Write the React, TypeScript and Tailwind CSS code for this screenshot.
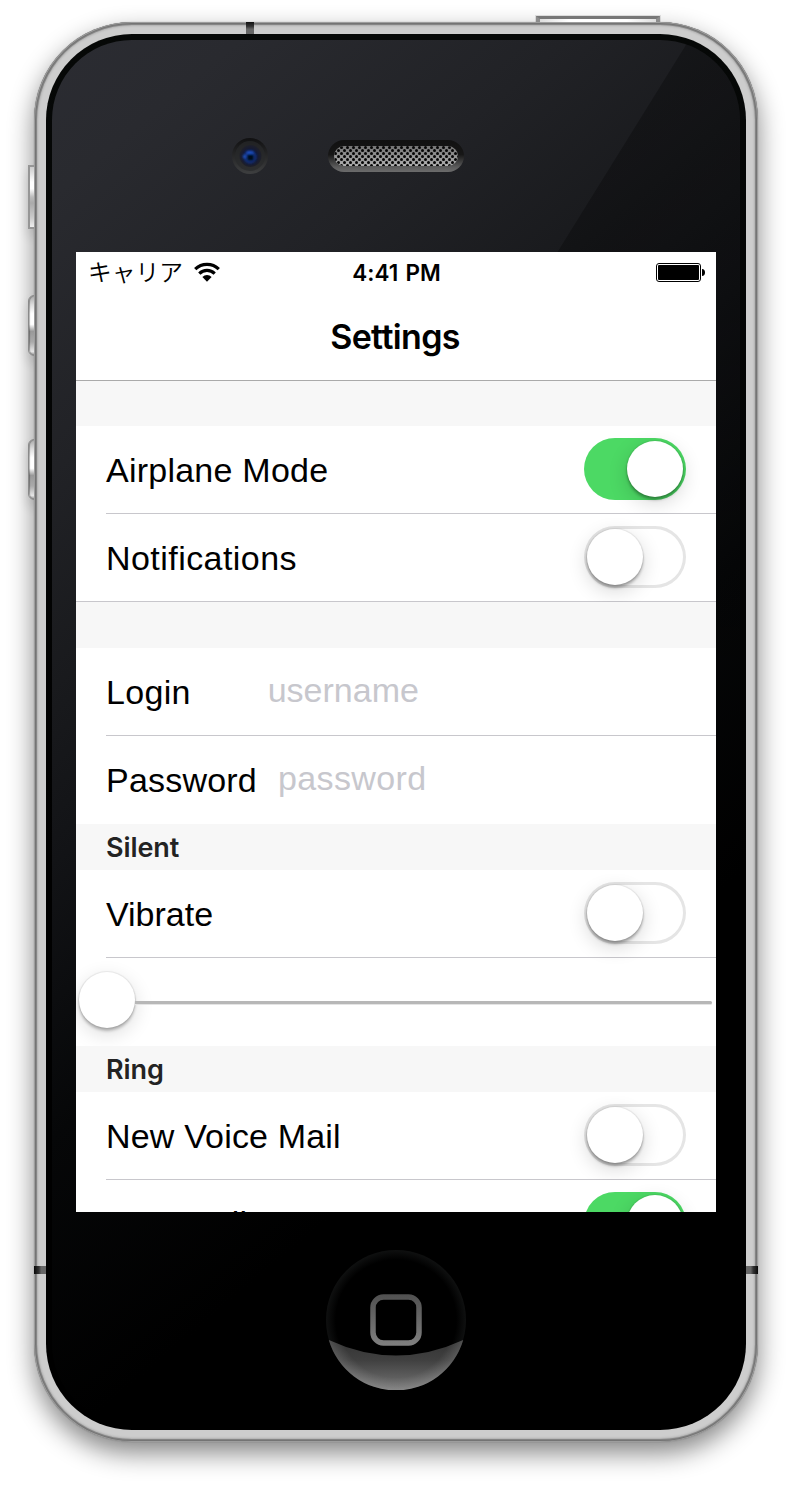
import React, { useState } from "react";

function Toggle({ initial = false, label }: { initial?: boolean; label: string }) {
  const [on, setOn] = useState(initial);
  return (
    <button
      type="button"
      role="switch"
      aria-label={label}
      aria-checked={on}
      onClick={() => setOn(!on)}
      className={`mb-px ml-auto flex h-[62px] w-[102px] shrink-0 items-center rounded-full p-[3px] ${
        on ? "justify-end bg-[#4cd964]" : "justify-start bg-white shadow-[inset_0_0_0_3px_#e5e5e5]"
      }`}
    >
      <span className="size-14 rounded-full bg-white shadow-[0_0_1px_1px_rgba(0,0,0,0.07),0_3px_3px_rgba(0,0,0,0.28),0_6px_20px_rgba(0,0,0,0.16)]" />
    </button>
  );
}

type RowProps = {
  label: string;
  tracking?: string;
  divider?: "inset" | "full" | "none";
  children?: React.ReactNode;
};

function Row({ label, tracking = "tracking-normal", divider = "inset", children }: RowProps) {
  return (
    <div
      className={`flex h-[88px] shrink-0 bg-white pl-[30px] ${divider === "full" ? "border-b border-[#c8c7cc]" : ""}`}
    >
      <div
        className={`flex flex-1 items-center pr-[30px] ${
          divider === "inset" ? "border-b border-[#c8c7cc]" : divider === "none" ? "border-b border-transparent" : ""
        }`}
      >
        <span className={`whitespace-nowrap pt-px text-[34px] leading-10 ${tracking}`}>{label}</span>
        {children}
      </div>
    </div>
  );
}

function SectionHeader({ title }: { title: string }) {
  return (
    <div className="flex h-[46px] shrink-0 items-center bg-[#f7f7f7] pl-[30px] pt-[2px] font-['Inter',sans-serif] text-[27px] font-semibold tracking-[-0.1px] text-[#232323]">
      {title}
    </div>
  );
}

function StatusBar() {
  return (
    <div className="grid h-10 grid-cols-3 items-center pl-3 pr-[11px]">
      <div className="flex items-center gap-[11px]">
        <span className="mb-[3px] font-['Noto_Sans_CJK_JP',sans-serif] text-[23.75px] font-[350] leading-9">キャリア</span>
        <svg width="26" height="20" viewBox="0 0 26 20" fill="none" aria-hidden="true">
          <path d="M1.2 7.2a16.7 16.7 0 0 1 23.600 0" stroke="black" strokeWidth="3.2" />
          <path d="M5.3 11.6a11 11 0 0 1 15.400 0" stroke="black" strokeWidth="3.2" />
          <path d="M8.4 15a6.500 6.500 0 0 1 9.200 0L13 19.700z" fill="black" />
        </svg>
      </div>
      <span className="pt-px text-center font-['Inter',sans-serif] text-[22.5px] font-semibold tracking-[0.05px] [word-spacing:1.500px]">
        4:41 PM
      </span>
      <div className="flex justify-end pt-[2px]">
        <svg width="49" height="20" viewBox="0 0 49 20" aria-hidden="true">
          <rect x=".5" y=".5" width="44" height="18" rx="2.5" fill="white" stroke="black" />
          <rect x="2" y="2" width="41" height="15" rx="1" fill="black" />
          <path d="M46 6c2 0 3 1.5 3 3.5S48 13 46 13z" fill="black" />
        </svg>
      </div>
    </div>
  );
}

function Screen() {
  return (
    <div className="flex h-[960px] w-[640px] shrink-0 flex-col overflow-hidden bg-white font-['Liberation_Sans',sans-serif] text-black">
      <header className="h-[129px] shrink-0 border-b border-[#aaa]">
        <StatusBar />
        <h1 className="pr-[2px] pt-[23px] text-center font-['Inter',sans-serif] text-[34px] font-semibold leading-[44px] tracking-[-0.65px]">
          Settings
        </h1>
      </header>
      <div className="h-[45px] shrink-0 bg-[#f7f7f7]" />
      <Row label="Airplane Mode" tracking="tracking-[0.24px]">
        <Toggle label="Airplane Mode" initial />
      </Row>
      <Row label="Notifications" tracking="tracking-[0.45px]" divider="full">
        <Toggle label="Notifications" />
      </Row>
      <div className="h-[46px] shrink-0 bg-[#f7f7f7]" />
      <Row label="Login" tracking="tracking-[0.3px]">
        <input
          aria-label="Login"
          placeholder="username"
          className="mb-[2px] ml-[77px] w-80 text-[34px] placeholder:text-[#c7c7cd]"
        />
      </Row>
      <Row label="Password" tracking="tracking-[0.2px]" divider="none">
        <input
          aria-label="Password"
          type="password"
          placeholder="password"
          className="mb-[2px] ml-[21px] w-80 text-[34px] tracking-[0.4px] placeholder:text-[#c7c7cd]"
        />
      </Row>
      <SectionHeader title="Silent" />
      <Row label="Vibrate">
        <Toggle label="Vibrate" />
      </Row>
      <div className="flex h-[88px] shrink-0 items-center pl-[3px] pr-1">
        <div className="mb-1 size-14 shrink-0 rounded-full bg-white shadow-[0_0_1px_1px_rgba(0,0,0,0.07),0_3px_3px_rgba(0,0,0,0.24),0_6px_20px_rgba(0,0,0,0.14)]" />
        <div className="mt-px h-[3px] flex-1 rounded-r-full bg-[#b7b7b7] shadow-[0_1px_0_#e4e4e4]" />
      </div>
      <SectionHeader title="Ring" />
      <Row label="New Voice Mail" tracking="tracking-[0.17px]">
        <Toggle label="New Voice Mail" />
      </Row>
      <Row label="New Mail" tracking="tracking-[0.17px] pb-[3px]">
        <Toggle label="New Mail" initial />
      </Row>
    </div>
  );
}

function Camera() {
  return (
    <svg width="36" height="36" viewBox="0 0 36 36" aria-hidden="true">
      <defs>
        <linearGradient id="cam-ring" x1="0" y1="0" x2="0" y2="1">
          <stop offset="0" stopColor="#101011" />
          <stop offset="1" stopColor="#3e3f40" />
        </linearGradient>
        <radialGradient id="cam-lens">
          <stop offset="0" stopColor="#0b1a4a" />
          <stop offset="0.5" stopColor="#11183a" />
          <stop offset="1" stopColor="#1f2029" />
        </radialGradient>
        <filter id="cam-soft">
          <feGaussianBlur stdDeviation="0.8" />
        </filter>
      </defs>
      <circle cx="18" cy="18" r="18" fill="url(#cam-ring)" />
      <circle cx="18" cy="18" r="15" fill="#28292b" opacity="0.7" />
      <circle cx="18.5" cy="18" r="11" fill="url(#cam-lens)" />
      <g filter="url(#cam-soft)">
        <circle cx="18" cy="19" r="6.5" fill="#12307c" />
        <ellipse cx="18" cy="14.500" rx="4" ry="1.700" fill="#1f50c0" />
        <circle cx="12.500" cy="18.500" r="1.700" fill="#1f55c4" />
        <circle cx="18.500" cy="19.500" r="3.600" fill="#05101c" />
      </g>
    </svg>
  );
}

function Speaker() {
  return (
    <svg width="136" height="32" viewBox="0 0 136 32" aria-hidden="true">
      <defs>
        <linearGradient id="spk-rim" x1="0" y1="0" x2="0" y2="1">
          <stop offset="0" stopColor="#111" />
          <stop offset="0.45" stopColor="#161616" />
          <stop offset="0.85" stopColor="#5c5c5c" />
          <stop offset="1" stopColor="#6c6c6c" />
        </linearGradient>
        <linearGradient id="spk-base" x1="0" y1="0" x2="0" y2="1">
          <stop offset="0" stopColor="#747474" />
          <stop offset="1" stopColor="#b0b0b0" />
        </linearGradient>
        <pattern id="spk-mesh" width="6" height="6" patternUnits="userSpaceOnUse">
          <circle cx="1.5" cy="1.5" r="1.500" fill="#050505" />
          <circle cx="4.5" cy="4.5" r="1.500" fill="#050505" />
        </pattern>
      </defs>
      <rect width="136" height="32" rx="16" fill="url(#spk-rim)" />
      <rect x="6" y="6" width="124" height="20" rx="10" fill="url(#spk-base)" />
      <rect x="6" y="6" width="124" height="20" rx="10" fill="url(#spk-mesh)" />
    </svg>
  );
}

function HomeButton() {
  return (
    <svg width="140" height="140" viewBox="0 0 140 140" aria-hidden="true">
      <defs>
        <radialGradient id="home-rim">
          <stop offset="0.86" stopColor="#000" />
          <stop offset="1" stopColor="#0f1010" />
        </radialGradient>
        <linearGradient id="home-shine" x1="0" y1="90" x2="0" y2="140" gradientUnits="userSpaceOnUse">
          <stop offset="0" stopColor="#333" />
          <stop offset="0.4" stopColor="#404040" />
          <stop offset="1" stopColor="#747474" />
        </linearGradient>
        <radialGradient id="home-shine-edge" cx="70" cy="70" r="70" gradientUnits="userSpaceOnUse">
          <stop offset="0.82" stopColor="#fff" stopOpacity="0" />
          <stop offset="1" stopColor="#fff" stopOpacity="0.14" />
        </radialGradient>
        <linearGradient id="home-square" x1="0" y1="44" x2="0" y2="96" gradientUnits="userSpaceOnUse">
          <stop offset="0" stopColor="#505050" />
          <stop offset="1" stopColor="#808080" />
        </linearGradient>
      </defs>
      <circle cx="70" cy="70" r="70" fill="url(#home-rim)" />
      <path d="M2.8 90Q70 121 137.2 90A70 70 0 0 1 2.8 90Z" fill="url(#home-shine)" />
      <path d="M2.8 90Q70 121 137.2 90A70 70 0 0 1 2.8 90Z" fill="url(#home-shine-edge)" />
      <rect x="47" y="47" width="46" height="46" rx="10.500" fill="none" stroke="url(#home-square)" strokeWidth="5.500" />
    </svg>
  );
}

function VolumeKey({ position }: { position: string }) {
  return (
    <div
      className={`absolute -left-1.5 h-[61px] w-3 rounded-l-[6px] border border-[#8a8a8a] bg-[linear-gradient(180deg,#aaa_0%,#ddd_15%,#fff_30%,#fff_48%,#999_60%,#aaa_78%,#e6e6e6_94%,#999_100%)] shadow-[inset_1px_0_1px_rgba(0,0,0,0.3),0_7px_12px_rgba(0,0,0,0.14)] ${position}`}
    />
  );
}

export default function App() {
  return (
    <div className="h-[1488px] w-[792px] overflow-hidden bg-white px-[34px] pt-[22px]">
      <div className="relative isolate h-[1420px] w-[724px]">
        <div className="absolute inset-0 rounded-[98px] shadow-[0_0_1px_rgba(0,0,0,0.4),0_11px_26px_rgba(0,0,0,0.48)]" />
        <div className="absolute -left-1.5 top-[143px] h-16 w-3 border-2 border-[#969696] bg-[linear-gradient(180deg,#ccc_0%,#fff_25%,#fff_36%,#bbb_50%,#aaa_60%,#ccc_85%,#eee_100%)] shadow-[0_7px_12px_rgba(0,0,0,0.12)]" />
        <VolumeKey position="top-[273px]" />
        <VolumeKey position="top-[417px]" />
        <div className="absolute -top-1.5 left-[502px] h-3 w-[124px] border-x-[4px] border-t-[3px] border-[#777] border-x-[#8c8c8c] bg-[linear-gradient(90deg,#ddd,#fff_25%,#fff_75%,#ddd)] outline outline-1 outline-black/10" />

        <div className="relative h-full w-full rounded-[98px] bg-[#cdcdcd] p-3 shadow-[inset_0_0_0_1px_#9d9d9d,inset_0_0_0_2px_#747474,inset_0_0_0_3px_#858585,inset_0_0_2px_4px_#b0b0b0]">
          <div className="absolute left-[212px] top-0 h-3 w-2 bg-[linear-gradient(180deg,#111,#333_35%,#666_60%,#666)]" />
          <div className="absolute left-0 top-[1244px] h-2 w-3 bg-[linear-gradient(90deg,#080808,#333_40%,#666_60%)]" />
          <div className="absolute right-0 top-[1244px] h-2 w-3 bg-[linear-gradient(270deg,#080808,#333_40%,#666_60%)]" />

          <div className="h-[1396px] w-[700px] rounded-[86px] bg-[linear-gradient(180deg,#060807,#000_60%)] p-1.5">
            <div className="relative isolate flex h-[1384px] w-[688px] flex-col items-center overflow-hidden rounded-[80px] bg-[linear-gradient(140deg,#2b2c32_0%,#292a2f_8%,#212226_22%,#191a1d_33%,#121316_42%,#060708_56%,#000_72%)]">
              <div className="absolute inset-0 -z-10 bg-[linear-gradient(180deg,rgba(0,0,0,0.28)_20%,transparent_55%)] [clip-path:polygon(637px_0,100%_0,100%_100%,0_100%,0_1027px)]" />
              <div className="flex h-[212px] w-full shrink-0 items-start pl-[180px] pt-[98px]">
                <div className="flex items-center gap-[60px]">
                  <Camera />
                  <Speaker />
                </div>
              </div>
              <Screen />
              <div className="pt-[38px]">
                <HomeButton />
              </div>
            </div>
          </div>
        </div>
      </div>
    </div>
  );
}
